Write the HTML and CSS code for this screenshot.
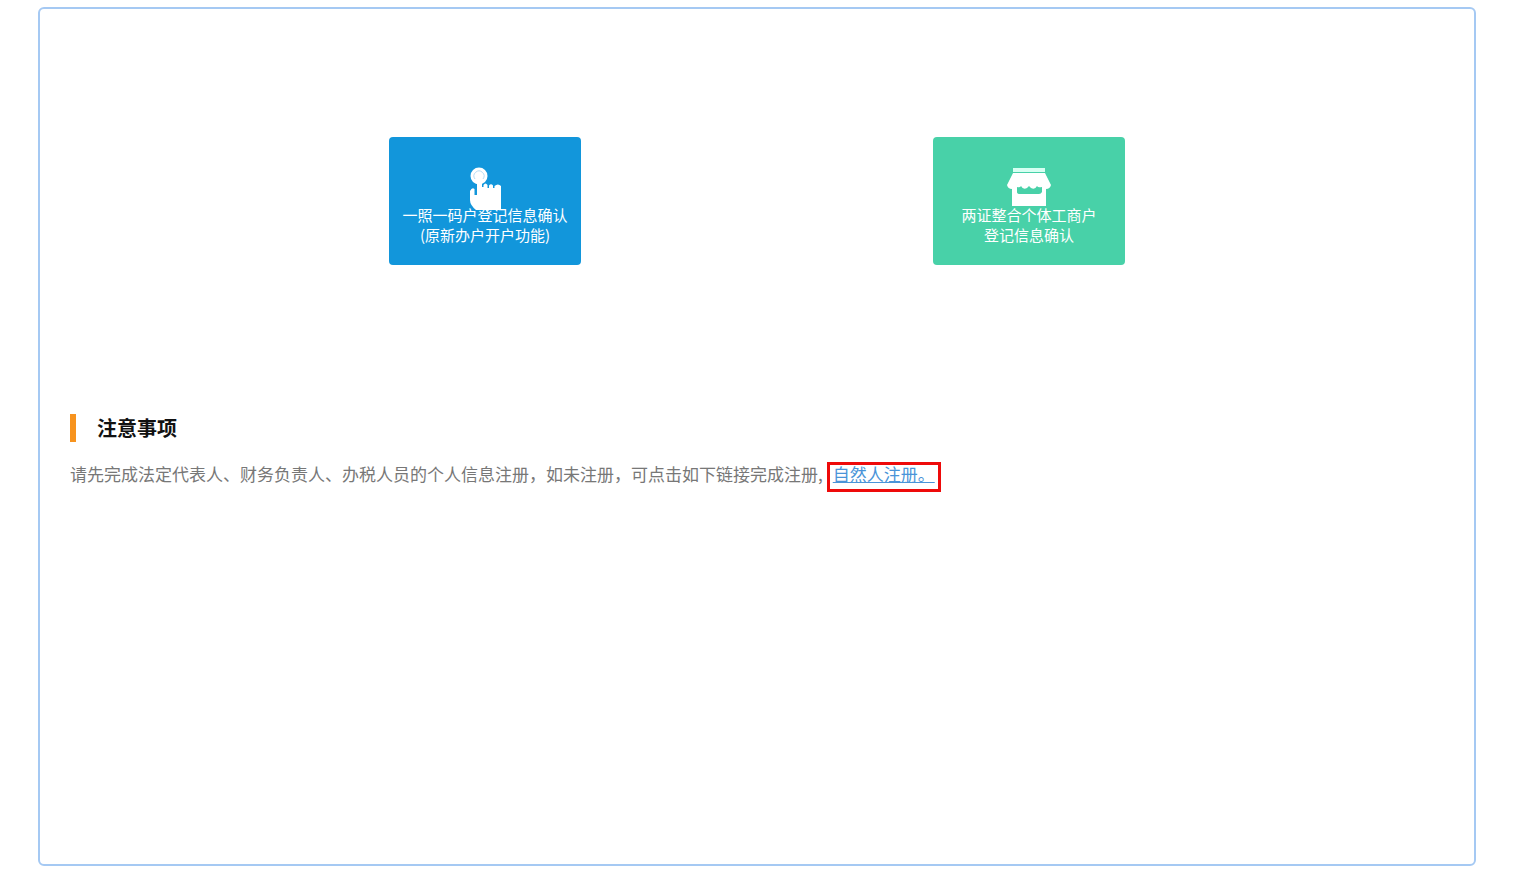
FILE: index.html
```html
<!DOCTYPE html>
<html lang="zh-CN">
  <head>
    <meta charset="UTF-8" />
    <meta name="viewport" content="width=device-width, initial-scale=1.0" />
    <title>登记信息确认</title>
    <link rel="stylesheet" href="styles.css">
  </head>
  <body>
    <main class="panel">
      <div class="entries">
        <button type="button" class="entry entry-blue">
          <svg class="entry-icon" width="30" height="38" viewBox="0 0 30 38" aria-hidden="true">
            <circle cx="9" cy="9" r="8.500" fill="#fff" />
            <path d="M5 12a5 5 0 1 1 8 0" fill="none" stroke="#b5dcf5" stroke-width="1" />
            <path d="M7 10Q7 8 9.500 8T12 10V20H13.500V18Q15.500 15 17.500 18V21H19V18.500Q21 16 23 18.500V21H24.500V19Q28 16 31 19V43H6Q0 38 0 33V24Q2 20 4.500 22V28H7Z" fill="#fff" />
          </svg>
          <span>一照一码户登记信息确认</span>
          <span>(原新办户开户功能)</span>
        </button>
        <button type="button" class="entry entry-green">
          <svg class="entry-icon" width="44" height="38" viewBox="0 0 44 38" aria-hidden="true">
            <path d="M6 1H38V5H6Z" fill="#d6fff2" />
            <path d="M6 6H38L44 18Q43 22 39 22V39H5V22Q1 22 0 18Z" fill="#fff" />
            <path d="M10 20Q13 21 14 19Q16 23 20 21L22 19L24 21Q28 23 30 19Q31 21 35 20V25Q34 27 32 27H13Q10 27 10 25Z" fill="#48d1a8" />
          </svg>
          <span>两证整合个体工商户</span>
          <span>登记信息确认</span>
        </button>
      </div>
      <section class="notice">
        <h2 class="notice-title">注意事项</h2>
        <p class="notice-text">请先完成法定代表人、财务负责人、办税人员的个人信息注册，如未注册，可点击如下链接完成注册,<a class="register-link" href="#">自然人注册。</a></p>
      </section>
    </main>
  </body>
</html>
```
FILE: styles.css
```css
* {
  box-sizing: border-box;
}

body {
  display: flex;
  min-height: 100vh;
  margin: 0;
  padding: 7px 38px;
  background-color: #fff;
  font-family: "Noto Sans CJK SC", sans-serif;
}

.panel {
  flex: 1;
  padding: 128px 30px 30px;
  border: 2px solid #a5c9f3;
  border-radius: 6px;
}

.entries {
  display: flex;
  justify-content: space-around;
  max-width: 1088px;
  margin: 0 auto;
}

.entry {
  display: flex;
  flex-direction: column;
  align-items: center;
  width: 192px;
  height: 128px;
  padding: 30px 0 0;
  border: none;
  border-radius: 4px;
  color: #fff;
  font-family: inherit;
  font-size: 15px;
  line-height: 20px;
  cursor: pointer;
}

.entry-blue {
  background-color: #1296db;
}

.entry-green {
  background-color: #48d1a8;
}

.entry-icon {
  flex-shrink: 0;
  overflow: visible;
}

.notice {
  margin-top: 149px;
}

.notice-title {
  margin: 0;
  padding-left: 21px;
  border-left: 6px solid #f7931e;
  color: #111;
  font-size: 20px;
  line-height: 28px;
}

.notice-text {
  margin: 20px 0 0;
  color: #777;
  font-size: 17px;
  line-height: 18px;
}

/* red frame around the link */
.register-link {
  display: inline-block;
  margin-left: 4px;
  padding: 0 3px 6px;
  border: 3px solid #ee0a0a;
  color: #4a94d8;
}
```
